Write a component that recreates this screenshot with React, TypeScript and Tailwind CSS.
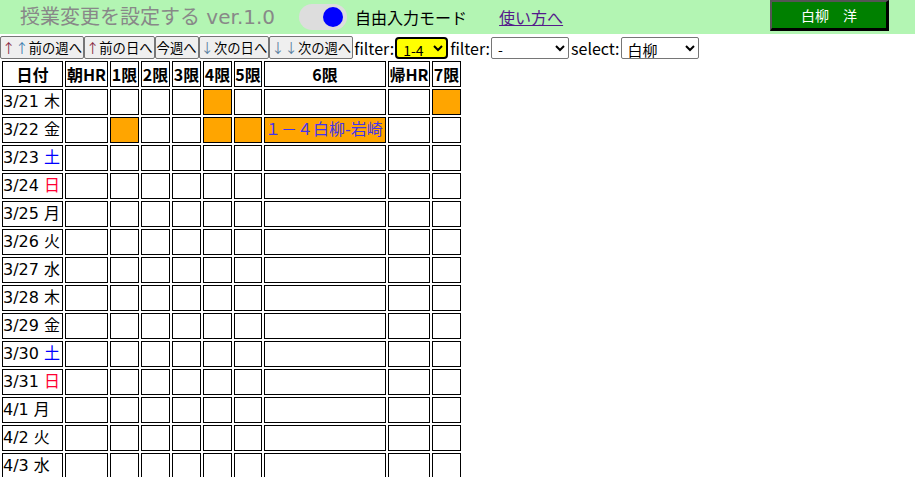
import React from 'react';

type Cell = { on?: boolean; text?: string };
type Row = { date: string; day: string; cells: Cell[] };

const periods = ['朝HR', '1限', '2限', '3限', '4限', '5限', '6限', '帰HR', '7限'];
const colWidths = ['w-[61px]', 'w-[43px]', 'w-[29px]', 'w-[29px]', 'w-[29px]', 'w-[29px]', 'w-[28px]', 'w-[122px]', 'w-[42px]', 'w-[29px]'];

const days = [
  ['3/21', '木'], ['3/22', '金'], ['3/23', '土'], ['3/24', '日'], ['3/25', '月'],
  ['3/26', '火'], ['3/27', '水'], ['3/28', '木'], ['3/29', '金'], ['3/30', '土'],
  ['3/31', '日'], ['4/1', '月'], ['4/2', '火'], ['4/3', '水'],
];

const rows: Row[] = days.map(([date, day], i) => {
  const cells: Cell[] = periods.map(() => ({}));
  if (i === 0) {
    cells[4] = { on: true };
    cells[8] = { on: true };
  }
  if (i === 1) {
    cells[1] = { on: true };
    cells[4] = { on: true };
    cells[5] = { on: true };
    cells[6] = { on: true, text: '１－４白柳-岩崎' };
  }
  return { date, day, cells };
});

function dayColor(day: string) {
  if (day === '土') return 'text-[#0000ff]';
  if (day === '日') return 'text-[#ff0033]';
  return 'text-black';
}

function NavButton({ children }: { children: React.ReactNode }) {
  return (
    <button className="h-[23px] px-[1px] text-[13.33px] leading-none bg-[#efefef] border border-[#767676] rounded-[2px] text-black whitespace-nowrap">
      {children}
    </button>
  );
}

const up1 = <span className="text-[#8a2b45]">↑</span>;
const up2 = <span className="text-[#3f7fb0]">↑</span>;
const down = <span className="text-[#5a7f9f]">↓</span>;

export default function App() {
  return (
    <div className="font-['Noto_Sans_CJK_JP',sans-serif] text-black bg-white min-h-screen">
      {/* Header */}
      <div className="h-[34px] bg-[#b3f5b3] flex items-center">
        <div className="ml-[20px] font-['DejaVu_Sans','Noto_Sans_CJK_JP',sans-serif] text-[20px] text-[#888888] leading-none whitespace-nowrap">
          授業変更を設定する ver.1.0
        </div>
        <div className="ml-[24px] w-[48px] h-[26px] rounded-full bg-[#dddddd] flex items-center justify-end pr-[4px]">
          <div className="w-[20px] h-[20px] rounded-full bg-[#0000ff]"></div>
        </div>
        <div className="ml-[8px] text-[16px] leading-none">自由入力モード</div>
        <a href="#" className="ml-[32px] text-[16px] leading-none underline text-[#551a8b]">使い方へ</a>
        <div className="ml-auto mr-[26px] self-start w-[119px] h-[31px] bg-[#008000] border-t-2 border-l-2 border-[#555555] border-r-[3px] border-b-[3px] border-r-black border-b-black flex items-center justify-center text-white text-[14px]">
          白柳　洋
        </div>
      </div>

      {/* Controls */}
      <div className="mt-[2px] flex items-center h-[23px] text-[16px]">
        <NavButton>{up1}{up2}前の週へ</NavButton>
        <NavButton>{up1}前の日へ</NavButton>
        <NavButton>今週へ</NavButton>
        <NavButton>{down}次の日へ</NavButton>
        <NavButton>{down}{down}次の週へ</NavButton>
        <span className="ml-[1px] leading-none">filter:</span>
        <select className="ml-[1px] w-[53px] h-[22px] bg-[#ffff00] border-2 border-black rounded-[4px] text-[14px] pl-[2px]" defaultValue="1-4">
          <option>1-4</option>
        </select>
        <span className="ml-[2px] leading-none">filter:</span>
        <select className="ml-[1px] w-[78px] h-[22px] bg-white border border-[#767676] rounded-[2px] text-[14px] pl-[2px]" defaultValue="-">
          <option>-</option>
        </select>
        <span className="ml-[2px] leading-none">select:</span>
        <select className="ml-[1px] w-[78px] h-[22px] bg-white border border-[#767676] rounded-[2px] text-[15px] pl-[2px]" defaultValue="白柳">
          <option>白柳</option>
        </select>
      </div>

      {/* Timetable */}
      <table className="w-[462px] border-separate border-spacing-[2px] table-fixed text-[16px] font-['DejaVu_Sans','Noto_Sans_CJK_JP',sans-serif]">
        <colgroup>
          {colWidths.map((w, i) => (
            <col key={i} className={w} />
          ))}
        </colgroup>
        <thead className="font-['Noto_Sans_CJK_JP',sans-serif]">
          <tr>
            <th className="h-[26px] p-0 border border-black font-bold leading-none overflow-hidden">日付</th>
            {periods.map((p) => (
              <th key={p} className="h-[26px] p-0 border border-black font-bold leading-none whitespace-nowrap overflow-hidden">
                {p}
              </th>
            ))}
          </tr>
        </thead>
        <tbody>
          {rows.map((r) => (
            <tr key={r.date}>
              <td className="h-[26px] p-0 border border-black leading-none whitespace-nowrap text-left overflow-hidden">
                {r.date} <span className={dayColor(r.day)}>{r.day}</span>
              </td>
              {r.cells.map((c, i) => (
                <td
                  key={i}
                  className={`h-[26px] p-0 border border-black leading-none whitespace-nowrap overflow-hidden ${c.on ? 'bg-[#ffa500]' : 'bg-white'}`}
                >
                  {c.text ? <span className="text-[#4433ee]">{c.text}</span> : null}
                </td>
              ))}
            </tr>
          ))}
        </tbody>
      </table>
    </div>
  );
}
